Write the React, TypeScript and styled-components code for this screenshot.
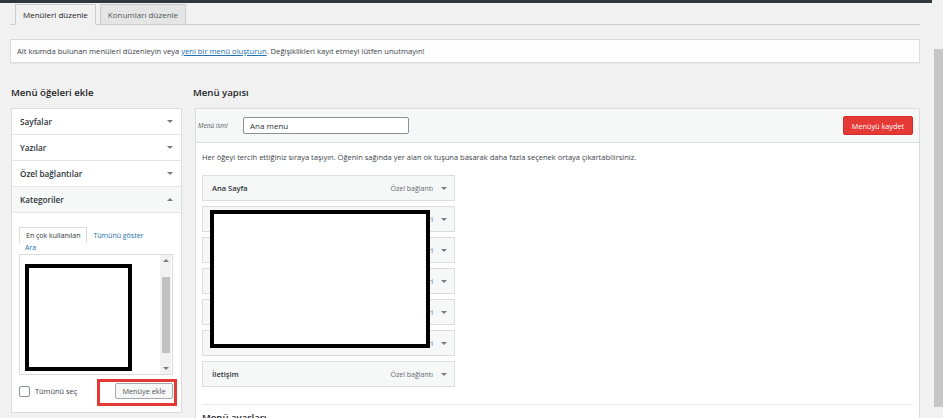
import React from 'react';
import styled, { createGlobalStyle } from 'styled-components';

// Page-wide defaults
const GlobalStyle = createGlobalStyle`
  body {
    margin: 0;
    background: #f1f1f1;
    font-family: "Open Sans", "Noto Sans", sans-serif;
    color: #3c434a;
    overflow: hidden;
  }
`;

const Page = styled.div`
  display: flex;
  align-items: flex-start;
  gap: 2px;
  height: 418px;
  overflow: hidden;
`;

const Main = styled.div`
  width: 932px;
  flex-shrink: 0;
`;

const TopBar = styled.div`
  height: 3px;
  background: #32373c;
`;

const ScrollStrip = styled.div`
  width: 9px;
  height: 358px;
  margin-top: 49px;
  background: #c6c6c6;
`;

const Wrap = styled.div`
  padding: 0 12px 0 10px;
`;

// Tabs at the top
const NavTabs = styled.div`
  display: flex;
  gap: 4px;
  margin-top: 1px;
  padding-left: 5px;
  border-bottom: 1px solid #cccccc;
`;

const NavTab = styled.div<{ $active?: boolean }>`
  height: 19px;
  line-height: 19px;
  padding: 0 7px;
  margin-bottom: -1px;
  font-size: 8px;
  color: ${p => (p.$active ? '#1d2327' : '#50575e')};
  background: ${p => (p.$active ? '#f1f1f1' : '#e5e5e5')};
  border: 1px solid #cccccc;
  border-bottom-color: ${p => (p.$active ? '#f1f1f1' : '#cccccc')};
`;

const Notice = styled.div`
  margin-top: 14px;
  height: 22px;
  line-height: 22px;
  padding: 0 6px;
  background: #fdfdfd;
  border: 1px solid #dcdcde;
  box-shadow: 0 1px 1px rgba(0, 0, 0, 0.04);
  font-size: 7.6px;
  color: #3c434a;
`;

const Link = styled.a`
  color: #2271b1;
  text-decoration: underline;
`;

// Two columns: add items / menu structure
const Columns = styled.div`
  display: flex;
  gap: 11px;
  margin-top: 22px;
`;

const LeftCol = styled.div`
  width: 171px;
  margin-left: 1px;
  flex-shrink: 0;
`;

const RightCol = styled.div`
  flex: 1;
`;

const ColTitle = styled.h2`
  margin: 0 0 7px;
  height: 16px;
  line-height: 16px;
  font-size: 9.6px;
  font-weight: 600;
  color: #1d2327;
`;

const Accordion = styled.div`
  background: #fff;
  border: 1px solid #dcdcde;
`;

const AccRow = styled.div<{ $open?: boolean }>`
  display: flex;
  align-items: center;
  justify-content: space-between;
  height: 25px;
  padding: 0 8px 0 8px;
  border-bottom: 1px solid #e5e5e5;
  background: ${p => (p.$open ? '#f6f7f7' : '#fff')};
  font-size: 8.2px;
  font-weight: 600;
  color: #2c3338;
`;

const Caret = styled.span<{ $up?: boolean }>`
  width: 0;
  height: 0;
  border-left: 3px solid transparent;
  border-right: 3px solid transparent;
  ${p =>
    p.$up
      ? 'border-bottom: 3.5px solid #787c82;'
      : 'border-top: 3.5px solid #787c82;'}
`;

const AccBody = styled.div`
  padding: 14px 8px 0 7px;
  height: 185px;
`;

const InnerTabs = styled.div`
  display: flex;
  align-items: flex-end;
  font-size: 7px;
`;

const InnerTab = styled.div`
  height: 15px;
  line-height: 15px;
  padding: 0 6px;
  border: 1px solid #dcdcde;
  border-bottom: none;
  color: #2c3338;
`;

const InnerLink = styled.div<{ $short?: boolean }>`
  height: ${p => (p.$short ? '9px' : '15px')};
  line-height: ${p => (p.$short ? '9px' : '15px')};
  padding: 0 6px;
  color: #2271b1;
`;

const ListBox = styled.div`
  position: relative;
  display: flex;
  justify-content: flex-end;
  height: 119px;
  margin-top: 2px;
  background: #fff;
  border: 1px solid #dcdcde;
`;

const ScrollTrack = styled.div`
  display: flex;
  flex-direction: column;
  align-items: center;
  justify-content: space-between;
  width: 11px;
  padding: 4px 0;
  margin-right: 1px;
  box-sizing: border-box;
  background: #f1f1f1;
`;

const ScrollThumb = styled.div`
  width: 8px;
  height: 76px;
  background: #c1c1c1;
`;

const Redacted = styled.div`
  position: absolute;
  box-sizing: border-box;
  background: #fff;
  border: 4px solid #000;
`;

const AccFooter = styled.div`
  position: relative;
  display: flex;
  align-items: center;
  justify-content: space-between;
  margin-top: 8px;
  height: 16px;
`;

const CheckLabel = styled.label`
  display: flex;
  align-items: center;
  gap: 5px;
  font-size: 7.4px;
  color: #3c434a;
`;

const Check = styled.span`
  width: 9px;
  height: 9px;
  border: 1px solid #8c8f94;
  border-radius: 2px;
  background: #fff;
`;

const SecondaryButton = styled.button`
  width: 58px;
  height: 16px;
  padding: 0;
  font-family: inherit;
  font-size: 7.3px;
  color: #50575e;
  background: #f6f7f7;
  border: 1px solid #a7aaad;
  border-radius: 2px;
`;

const Highlight = styled.div`
  position: absolute;
  right: -4px;
  top: -4px;
  width: 80px;
  height: 27px;
  box-sizing: border-box;
  border: 3px solid #e53935;
`;

// Menu structure panel
const StructPanel = styled.div`
  margin-left: 2px;
  background: #fff;
  border: 1px solid #dcdcde;
  height: 400px;
`;

const StructHeader = styled.div`
  display: flex;
  align-items: center;
  height: 33px;
  padding: 0 6px 0 2px;
  background: #f6f7f7;
  border-bottom: 1px solid #dcdcde;
`;

const NameLabel = styled.label`
  width: 45px;
  font-size: 6.5px;
  font-style: italic;
  color: #50575e;
`;

const NameInput = styled.div`
  width: 152px;
  height: 15px;
  line-height: 15px;
  padding: 0 6px;
  background: #fff;
  border: 1px solid #8c8f94;
  border-radius: 2px;
  font-size: 8px;
  color: #2c3338;
`;

const SaveButton = styled.button`
  margin-left: auto;
  width: 70px;
  height: 19px;
  padding: 0;
  font-family: inherit;
  font-size: 7.3px;
  color: #fff;
  background: #e53935;
  border: 1px solid #d32f2f;
  border-radius: 2px;
`;

const StructBody = styled.div`
  padding: 0 6px;
`;

const Hint = styled.p`
  margin: 9px 0 0;
  height: 11px;
  line-height: 11px;
  font-size: 7.5px;
  white-space: nowrap;
  color: #3c434a;
`;

const ItemList = styled.div`
  position: relative;
  display: flex;
  flex-direction: column;
  gap: 5px;
  width: 253px;
  margin-top: 12px;
`;

const MenuItem = styled.div`
  display: flex;
  align-items: center;
  height: 24px;
  padding: 0 7px 0 9px;
  background: #f6f7f7;
  border: 1px solid #dcdcde;
`;

const ItemTitle = styled.span`
  flex: 1;
  font-size: 7.5px;
  font-weight: 600;
  color: #2c3338;
`;

const ItemType = styled.span`
  margin-right: 8px;
  font-size: 7px;
  color: #646970;
`;

const Divider = styled.div`
  margin-top: 17px;
  border-top: 1px solid #e8e8e8;
`;

const SubTitle = styled.h3`
  margin: 6px 0 0;
  font-size: 9.6px;
  font-weight: 600;
  color: #1d2327;
`;

const accSections = ['Sayfalar', 'Yazılar', 'Özel bağlantılar'];

const menuItems = [
  { title: 'Ana Sayfa', type: 'Özel bağlantı' },
  { title: '', type: 'Kategori' },
  { title: '', type: 'Kategori' },
  { title: '', type: 'Kategori' },
  { title: '', type: 'Kategori' },
  { title: '', type: 'Kategori' },
  { title: 'İletişim', type: 'Özel bağlantı' },
];

const App: React.FC = () => {
  return (
    <>
      <GlobalStyle />
      <Page>
        <Main>
          <TopBar />
          <Wrap>
            <NavTabs>
              <NavTab $active>Menüleri düzenle</NavTab>
              <NavTab>Konumları düzenle</NavTab>
            </NavTabs>

            <Notice>
              Alt kısımda bulunan menüleri düzenleyin veya <Link>yeni bir menü oluşturun</Link>. Değişiklikleri kayıt etmeyi lütfen unutmayın!
            </Notice>

            <Columns>
              <LeftCol>
                <ColTitle>Menü öğeleri ekle</ColTitle>
                <Accordion>
                  {accSections.map(name => (
                    <AccRow key={name}>
                      {name}
                      <Caret />
                    </AccRow>
                  ))}
                  <AccRow $open>
                    Kategoriler
                    <Caret $up />
                  </AccRow>
                  <AccBody>
                    <InnerTabs>
                      <InnerTab>En çok kullanılan</InnerTab>
                      <InnerLink>Tümünü göster</InnerLink>
                    </InnerTabs>
                    <InnerTabs>
                      <InnerLink $short>Ara</InnerLink>
                    </InnerTabs>
                    <ListBox>
                      <Redacted style={{ left: 5, top: 9, width: 107, height: 107 }} />
                      <ScrollTrack>
                        <Caret $up />
                        <ScrollThumb />
                        <Caret />
                      </ScrollTrack>
                    </ListBox>
                    <AccFooter>
                      <CheckLabel>
                        <Check />
                        Tümünü seç
                      </CheckLabel>
                      <SecondaryButton>Menüye ekle</SecondaryButton>
                      <Highlight />
                    </AccFooter>
                  </AccBody>
                </Accordion>
              </LeftCol>

              <RightCol>
                <ColTitle>Menü yapısı</ColTitle>
                <StructPanel>
                  <StructHeader>
                    <NameLabel>Menü ismi</NameLabel>
                    <NameInput>Ana menu</NameInput>
                    <SaveButton>Menüyü kaydet</SaveButton>
                  </StructHeader>
                  <StructBody>
                    <Hint>
                      Her öğeyi tercih ettiğiniz sıraya taşıyın. Öğenin sağında yer alan ok tuşuna basarak daha fazla seçenek ortaya çıkartabilirsiniz.
                    </Hint>
                    <ItemList>
                      {menuItems.map((item, i) => (
                        <MenuItem key={i}>
                          <ItemTitle>{item.title}</ItemTitle>
                          <ItemType>{item.type}</ItemType>
                          <Caret />
                        </MenuItem>
                      ))}
                      <Redacted style={{ left: 8, top: 35, width: 220, height: 138 }} />
                    </ItemList>
                    <Divider />
                    <SubTitle>Menü ayarları</SubTitle>
                  </StructBody>
                </StructPanel>
              </RightCol>
            </Columns>
          </Wrap>
        </Main>
        <ScrollStrip />
      </Page>
    </>
  );
};

export default App;
